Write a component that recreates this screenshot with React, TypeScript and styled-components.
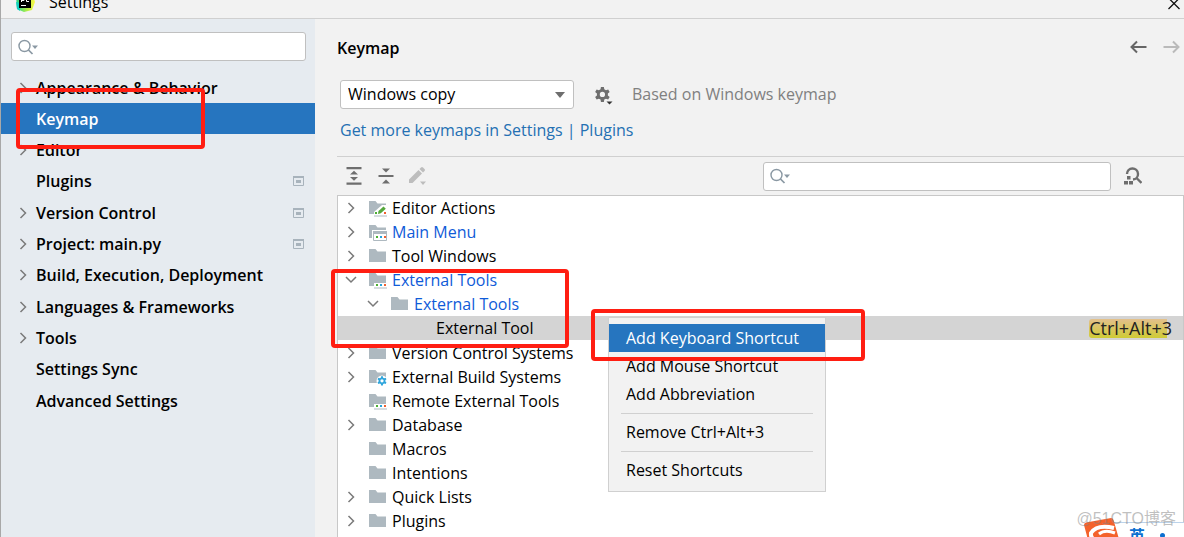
import React from 'react';
import styled, { createGlobalStyle, css } from 'styled-components';

const Global = createGlobalStyle`
  * { box-sizing: border-box; }
  html, body { margin: 0; }
  body {
    background: #f2f2f2;
    font-family: 'Open Sans', 'Noto Sans', 'Noto Sans CJK SC', sans-serif;
    font-size: 16px;
    color: #000;
  }
  button, input, select { font: inherit; color: inherit; }
`;

const Window = styled.div`
  position: relative;
  display: flex;
  flex-direction: column;
  height: 100vh;
  overflow: hidden;
  border-left: 1px solid #a8a8a8;
`;

const TitleBar = styled.header`
  display: flex;
  flex: none;
  align-items: flex-end;
  height: 19px;
  padding: 0 3px 6px 14px;
  border-bottom: 1px solid #d0d0d0;
  overflow: hidden;
`;

const WindowTitle = styled.h1`
  flex: 1;
  margin: 0 0 0 14px;
  font-size: 16px;
  font-weight: 400;
  line-height: 20px;
`;

const Body = styled.div`
  display: flex;
  flex: 1;
  min-height: 0;
`;

const Sidebar = styled.aside`
  flex: none;
  width: 314px;
  padding-top: 13px;
  background: #e6ebf0;
`;

const SearchField = styled.label<{ $grow?: boolean }>`
  display: flex;
  align-items: center;
  height: 29px;
  padding-left: 6px;
  background: #fff;
  border: 1px solid #c0c0c0;
  border-radius: 3px;
  ${(p) => (p.$grow ? css`width: 348px;` : css`margin: 0 9px 0 10px;`)}

  input {
    flex: 1;
    min-width: 0;
    height: 24px;
    border: 0;
    outline: 0;
    background: transparent;
  }
`;

const NavList = styled.ul`
  margin: 11px 0 0;
  padding: 0;
  list-style: none;
`;

const NavItem = styled.button<{ $active?: boolean }>`
  display: flex;
  align-items: center;
  width: 100%;
  height: 31px;
  padding: 0 11px 0 15px;
  border: 0;
  background: ${(p) => (p.$active ? '#2675bf' : 'transparent')};
  color: ${(p) => (p.$active ? '#fff' : '#000')};
  font-weight: 600;
  text-align: left;
  white-space: nowrap;
`;

const NavRow = styled.li`
  height: 31px;
  &:nth-child(3n + 4) { margin-bottom: 1px; }
`;

const NavLabel = styled.span`
  flex: 1;
  margin-left: 6px;
`;

const Main = styled.main`
  display: flex;
  flex: 1;
  flex-direction: column;
  min-width: 0;
  padding-left: 22px;
`;

const PageHeader = styled.div`
  display: flex;
  align-items: center;
  justify-content: space-between;
  height: 54px;
  padding: 2px 4px 0 0;
`;

const PageTitle = styled.h2`
  margin: 0;
  padding-top: 2px;
  font-size: 16px;
  font-weight: 600;
  line-height: 22px;
`;

const IconButton = styled.button`
  display: flex;
  align-items: center;
  justify-content: center;
  padding: 0;
  border: 0;
  background: transparent;
`;

const ButtonGroup = styled.div<{ $gap: number }>`
  display: flex;
  align-items: center;
  gap: ${(p) => p.$gap}px;
`;

const SchemeRow = styled.div`
  display: flex;
  align-items: center;
  height: 43px;
  padding-left: 3px;
`;

const SelectBox = styled.div`
  display: grid;
  align-items: center;
  width: 234px;
  margin-right: 20px;

  > * { grid-area: 1 / 1; }
  > svg { justify-self: end; margin-right: 9px; pointer-events: none; }
`;

const SchemeSelect = styled.select`
  width: 100%;
  height: 29px;
  padding: 0 24px 1px 7px;
  appearance: none;
  background: #fff;
  border: 1px solid #c0c0c0;
  border-radius: 3px;
`;

const Hint = styled.span`
  margin-left: 18px;
  padding-bottom: 2px;
  color: #808080;
`;

const PluginLink = styled.a`
  align-self: flex-start;
  margin: 3px 0 0 3px;
  color: #2470b3;
  line-height: 22px;
  text-decoration: none;
`;

const Toolbar = styled.div`
  display: flex;
  flex: none;
  align-items: center;
  justify-content: space-between;
  height: 39px;
  margin-top: 15px;
  padding: 0 42px 0 8px;
  border-top: 1px solid #d0d0d0;
`;

const Tree = styled.ul`
  flex: 1;
  min-height: 0;
  margin: 0;
  padding: 0;
  list-style: none;
  background: #fff;
  border: solid #c8c8c8;
  border-width: 1px 1px 0;
  overflow: hidden;
`;

const TreeRow = styled.li<{ $depth: number; $selected?: boolean; $link?: boolean }>`
  display: flex;
  align-items: center;
  height: 24px;
  padding: 0 11px 0 ${(p) => 6 + p.$depth * 22}px;
  background: ${(p) => (p.$selected ? '#d4d4d4' : 'transparent')};
  color: ${(p) => (p.$link ? '#0f5bd8' : '#000')};
  white-space: nowrap;
  &:nth-child(6) { margin-bottom: 1px; }
`;

const TreeIcon = styled.span`
  display: flex;
  width: 18px;
  margin: 0 5px 0 11px;
`;

const TreeLabel = styled.span`
  flex: 1;
`;

const Shortcut = styled.kbd`
  font: inherit;
  font-size: 18px;
  border-radius: 3px;
  color: #222;
  line-height: 19px;
  background: linear-gradient(#e3c08c, #cfcb35) no-repeat left / 78px 100%;
`;

const Menu = styled.div`
  position: absolute;
  left: 607px;
  top: 317px;
  width: 218px;
  height: 175px;
  padding: 6px 0 0;
  background: #f2f2f2;
  border: 1px solid #d0d0d0;
`;

const MenuItem = styled.button<{ $active?: boolean }>`
  display: flex;
  align-items: center;
  width: 100%;
  height: 28px;
  padding: 0 17px;
  border: 0;
  background: ${(p) => (p.$active ? '#2675bf' : 'transparent')};
  color: ${(p) => (p.$active ? '#fff' : '#000')};
  white-space: nowrap;
`;

const MenuDivider = styled.hr`
  margin: 5px 12px 4px;
  border: 0;
  border-top: 1px solid #d0d0d0;
`;

const Highlight = styled.div<{ $x: number; $y: number; $w: number; $h: number }>`
  position: absolute;
  left: ${(p) => p.$x}px;
  top: ${(p) => p.$y}px;
  width: ${(p) => p.$w}px;
  height: ${(p) => p.$h}px;
  border: 4px solid #ff1e12;
  border-radius: 4px;
  pointer-events: none;
`;

const ImeBar = styled.div`
  position: absolute;
  right: 0;
  top: 522px;
  display: flex;
  align-items: flex-start;
  width: 80px;
  height: 36px;
  padding-left: 25px;
  background: #fff;
  border-top: 1px solid #bcd3ea;
  color: #0b6fd0;
  font-weight: 700;
  line-height: 26px;

  svg {
    position: absolute;
    left: -21px;
    top: -6px;
  }
`;

const ImeDot = styled.span`
  width: 5px;
  height: 5px;
  margin: 10px 0 0 15px;
  border-radius: 50%;
  background: #0b6fd0;
`;

const Watermark = styled.div`
  position: absolute;
  right: 8px;
  top: 508px;
  color: rgba(130, 130, 130, 0.5);
  font-family: 'Liberation Sans', 'Noto Sans CJK SC', sans-serif;
  font-size: 16px;
  line-height: 22px;
`;

const Chevron = ({ open }: { open?: boolean }) => (
  <svg width="14" height="14" viewBox="0 0 14 14" fill="none" stroke="#7a7a7a" strokeWidth="1.5">
    <path d={open ? 'M2 4 7 9 12 4' : 'M4.5 2 9.5 7 4.5 12'} />
  </svg>
);

const Blank = styled.span`
  flex: none;
  width: 14px;
`;

const SearchIcon = () => (
  <svg width="22" height="18" viewBox="0 0 22 18" fill="none">
    <circle cx="6.500" cy="8" r="5.500" stroke="#8a98a3" strokeWidth="1.400" />
    <path d="m10.500 12 4 4" stroke="#8a98a3" strokeWidth="1.700" />
    <path d="M14 7.500h6l-3 3.500z" fill="#8a98a3" />
  </svg>
);

const ProjectIcon = () => (
  <svg width="11" height="10" viewBox="0 0 11 10">
    <path d="M.5.5h10v9H.5z" fill="none" stroke="#a8b3bc" />
    <path d="M0 0h11v2H0zM3 4h5v3H3z" fill="#a8b3bc" />
  </svg>
);

const GEAR =
  'M6.600 0h2.800l.4 2.200 1.600.9 2.100-.8 1.400 2.400-1.700 1.500v1.800l1.700 1.500-1.400 2.400-2.100-.8-1.600.9-.4 2.200H6.600l-.4-2.200-1.600-.9-2.100.8-1.400-2.400L2.800 8V6.200L1.100 4.700l1.400-2.400 2.100.8 1.600-.9zM8 4.600a2.500 2.500 0 1 0 0 5 2.500 2.500 0 0 0 0-5z';

type Badge = 'edit' | 'menu' | 'dots' | 'gear';

const Dots = ({ y }: { y: number }) => (
  <>
    <path d={`M7 ${y}h2v2H7z`} fill="#4caf32" />
    <path d={`M11 ${y}h2v2h-2z`} fill="#28a4dc" />
    <path d={`M15 ${y}h2v2h-2z`} fill="#f06030" />
  </>
);

const Folder = ({ badge }: { badge?: Badge }) => (
  <svg width="18" height="18" viewBox="0 0 18 18">
    <path d="M0 2h6.500l2 2.500H17V15H0z" fill="#aeb9c0" />
    {badge === 'edit' && (
      <>
        <path d="M5 13 13 6h5v12H5z" fill="#fff" />
        <path d="m9 15 .5-3 5-4.500 2.300 2.300-5 4.500z" fill="#55a83c" />
        <path d="M6 13h2v2H6z" fill="#4caf32" />
        <path d="M15 13h2v2h-2z" fill="#f06030" />
        <path d="M5 16.500h13v1H5z" fill="#aeb9c0" />
      </>
    )}
    {badge === 'menu' && (
      <>
        <path d="M3 7h15v11H3z" fill="#fff" />
        <path d="M4.500 8.500h13v9h-13z" fill="#fff" stroke="#aeb9c0" />
        <path d="M4 8h14v3H4z" fill="#aeb9c0" />
        <Dots y={13} />
      </>
    )}
    {badge === 'dots' && (
      <>
        <path d="M5 12h13v6H5z" fill="#fff" />
        <Dots y={13} />
        <path d="M5 16.500h13v1H5z" fill="#aeb9c0" />
      </>
    )}
    {badge === 'gear' && (
      <>
        <circle cx="13" cy="13" r="5.500" fill="#fff" />
        <path d={GEAR} transform="translate(7.800 8.200) scale(.65)" fill="#2fa5dc" fillRule="evenodd" />
      </>
    )}
  </svg>
);

const Logo = () => (
  <svg width="20" height="20" viewBox="0 0 20 20">
    <defs>
      <linearGradient id="pc" x1="0" y1="0" x2="1" y2="0">
        <stop offset="0" stopColor="#21d789" />
        <stop offset=".6" stopColor="#b6ee45" />
        <stop offset="1" stopColor="#fcf84a" />
      </linearGradient>
    </defs>
    <path d="M1 3 8 0l10 3 2 7-3 8-8 2-7-3z" fill="url(#pc)" />
    <path d="m1 10 4 1v8l-3-2z" fill="#12cfc0" />
    <path d="M4 4h12v12H4z" fill="#000" />
    <path d="M6 13h5v1H6z" fill="#fff" />
    <path d="M6.500 10V6h2.500v2.500H6.500M14 6.500h-2.500v3H14" fill="none" stroke="#fff" />
  </svg>
);

const nav: { label: string; arrow?: boolean; active?: boolean; project?: boolean }[] = [
  { label: 'Appearance & Behavior', arrow: true },
  { label: 'Keymap', active: true },
  { label: 'Editor', arrow: true },
  { label: 'Plugins', project: true },
  { label: 'Version Control', arrow: true, project: true },
  { label: 'Project: main.py', arrow: true, project: true },
  { label: 'Build, Execution, Deployment', arrow: true },
  { label: 'Languages & Frameworks', arrow: true },
  { label: 'Tools', arrow: true },
  { label: 'Settings Sync' },
  { label: 'Advanced Settings' },
];

type Node = {
  label: string;
  depth?: number;
  arrow?: 'open' | 'closed';
  badge?: Badge;
  link?: boolean;
  leaf?: boolean;
  shortcut?: string;
};

const tree: Node[] = [
  { label: 'Editor Actions', arrow: 'closed', badge: 'edit' },
  { label: 'Main Menu', arrow: 'closed', badge: 'menu', link: true },
  { label: 'Tool Windows', arrow: 'closed' },
  { label: 'External Tools', arrow: 'open', badge: 'dots', link: true },
  { label: 'External Tools', arrow: 'open', depth: 1, link: true },
  { label: 'External Tool', depth: 2, leaf: true, shortcut: 'Ctrl+Alt+3' },
  { label: 'Version Control Systems', arrow: 'closed' },
  { label: 'External Build Systems', arrow: 'closed', badge: 'gear' },
  { label: 'Remote External Tools', badge: 'dots' },
  { label: 'Database', arrow: 'closed' },
  { label: 'Macros' },
  { label: 'Intentions' },
  { label: 'Quick Lists', arrow: 'closed' },
  { label: 'Plugins', arrow: 'closed' },
];

export default function App() {
  return (
    <>
      <Global />
      <Window>
        <TitleBar>
          <Logo />
          <WindowTitle>Settings</WindowTitle>
          <IconButton aria-label="Close">
            <svg width="14" height="14" viewBox="0 0 14 14" stroke="#111" strokeWidth="1.300">
              <path d="m1.500 0 11 11m0-11-11 11" />
            </svg>
          </IconButton>
        </TitleBar>
        <Body>
          <Sidebar>
            <SearchField>
              <SearchIcon />
              <input type="text" aria-label="Search settings" />
            </SearchField>
            <NavList>
              {nav.map((n) => (
                <NavRow key={n.label}>
                  <NavItem $active={n.active}>
                    {n.arrow ? <Chevron /> : <Blank />}
                    <NavLabel>{n.label}</NavLabel>
                    {n.project && <ProjectIcon />}
                  </NavItem>
                </NavRow>
              ))}
            </NavList>
          </Sidebar>
          <Main>
            <PageHeader>
              <PageTitle>Keymap</PageTitle>
              <ButtonGroup $gap={16}>
                <IconButton aria-label="Back">
                  <svg width="17" height="14" viewBox="0 0 17 14" fill="none" stroke="#666" strokeWidth="2">
                    <path d="M16.500 7H2M7 1.500 1.500 7 7 12.500" />
                  </svg>
                </IconButton>
                <IconButton aria-label="Forward" disabled>
                  <svg width="17" height="14" viewBox="0 0 17 14" fill="none" stroke="#bababa" strokeWidth="2">
                    <path d="M.5 7H15M10 1.500 15.500 7 10 12.500" />
                  </svg>
                </IconButton>
              </ButtonGroup>
            </PageHeader>
            <SchemeRow>
              <SelectBox>
                <SchemeSelect aria-label="Keymap scheme">
                  <option>Windows copy</option>
                </SchemeSelect>
                <svg width="10" height="6" viewBox="0 0 10 6">
                  <path d="M0 0h10L5 6z" fill="#6e6e6e" />
                </svg>
              </SelectBox>
              <IconButton aria-label="Keymap actions">
                <svg width="20" height="20" viewBox="0 0 20 20">
                  <path d={GEAR} transform="translate(0 2) scale(1.050)" fill="#6e6e6e" fillRule="evenodd" />
                  <path d="M11.500 15.500h8v1l-3.500 3.500h-1l-3.500-3.500z" fill="#f2f2f2" />
                  <path d="M12.500 16.500h6l-3 3z" fill="#333" />
                </svg>
              </IconButton>
              <Hint>Based on Windows keymap</Hint>
            </SchemeRow>
            <PluginLink href="#plugins">Get more keymaps in Settings | Plugins</PluginLink>
            <Toolbar>
              <ButtonGroup $gap={14}>
                <IconButton aria-label="Expand all">
                  <svg width="18" height="18" viewBox="0 0 18 18" fill="#6e6e6e">
                    <path d="M1.500 0h15v2.300h-15zM1.500 15.500h15v2.300h-15zM9 3.800l4 3.700H5zM5 10h8l-4 3.700z" />
                  </svg>
                </IconButton>
                <IconButton aria-label="Collapse all">
                  <svg width="18" height="18" viewBox="0 0 18 18" fill="#6e6e6e">
                    <path d="M1.500 8h15v2h-15zM5 1.500h8L9 5.500zM9 12.500l4 4H5z" />
                  </svg>
                </IconButton>
                <IconButton aria-label="Edit shortcut" disabled>
                  <svg width="18" height="18" viewBox="0 0 18 18" fill="#bdbdbd">
                    <path d="M0 16v-3.500L9.500 3l3.500 3.500L3.500 16zM10.500 2 12 .5q1-1 2 0L15.500 2q1 1 0 2L14 5.500zM11 14.500h6l-3 3.500z" />
                  </svg>
                </IconButton>
              </ButtonGroup>
              <ButtonGroup $gap={13}>
                <SearchField $grow>
                  <SearchIcon />
                  <input type="text" aria-label="Search actions" />
                </SearchField>
                <IconButton aria-label="Find actions by shortcut">
                  <svg width="18" height="18" viewBox="0 0 18 18" fill="none">
                    <path d="M3 7a5.500 5.500 0 1 1 6 5.500M12.500 11l5 5" stroke="#6e6e6e" strokeWidth="2.400" />
                    <path d="M0 14h4v3.500H0zM5 14h4v3.500H5zM3 9h3.500v3.500H3z" fill="#6e6e6e" />
                  </svg>
                </IconButton>
              </ButtonGroup>
            </Toolbar>
            <Tree>
              {tree.map((n, i) => (
                <TreeRow key={i} $depth={n.depth ?? 0} $link={n.link} $selected={!!n.shortcut}>
                  {n.arrow ? <Chevron open={n.arrow === 'open'} /> : <Blank />}
                  <TreeIcon>{!n.leaf && <Folder badge={n.badge} />}</TreeIcon>
                  <TreeLabel>{n.label}</TreeLabel>
                  {n.shortcut && <Shortcut>{n.shortcut}</Shortcut>}
                </TreeRow>
              ))}
            </Tree>
          </Main>
        </Body>
        <Menu>
          <MenuItem $active>Add Keyboard Shortcut</MenuItem>
          <MenuItem>Add Mouse Shortcut</MenuItem>
          <MenuItem>Add Abbreviation</MenuItem>
          <MenuDivider />
          <MenuItem>Remove Ctrl+Alt+3</MenuItem>
          <MenuDivider />
          <MenuItem>Reset Shortcuts</MenuItem>
        </Menu>
        <Highlight $x={15} $y={88} $w={189} $h={61} />
        <Highlight $x={330} $y={269} $w={238} $h={79} />
        <Highlight $x={590} $y={309} $w={274} $h={52} />
        <ImeBar>
          <svg width="37" height="34" viewBox="0 0 37 34">
            <path d="M1 8q0-2 2-2.500L28 1q2 0 2.500 2L36 22v12H8z" fill="#f4622b" />
            <path d="M31 11Q14 7 8 16q-1 9 14 8" fill="none" stroke="#fff" strokeWidth="4" />
            <path d="M32 16q-10-4-16 1" fill="none" stroke="#fff" strokeWidth="3" />
          </svg>
          <span>英</span>
          <ImeDot />
        </ImeBar>
        <Watermark>@51CTO博客</Watermark>
      </Window>
    </>
  );
}
